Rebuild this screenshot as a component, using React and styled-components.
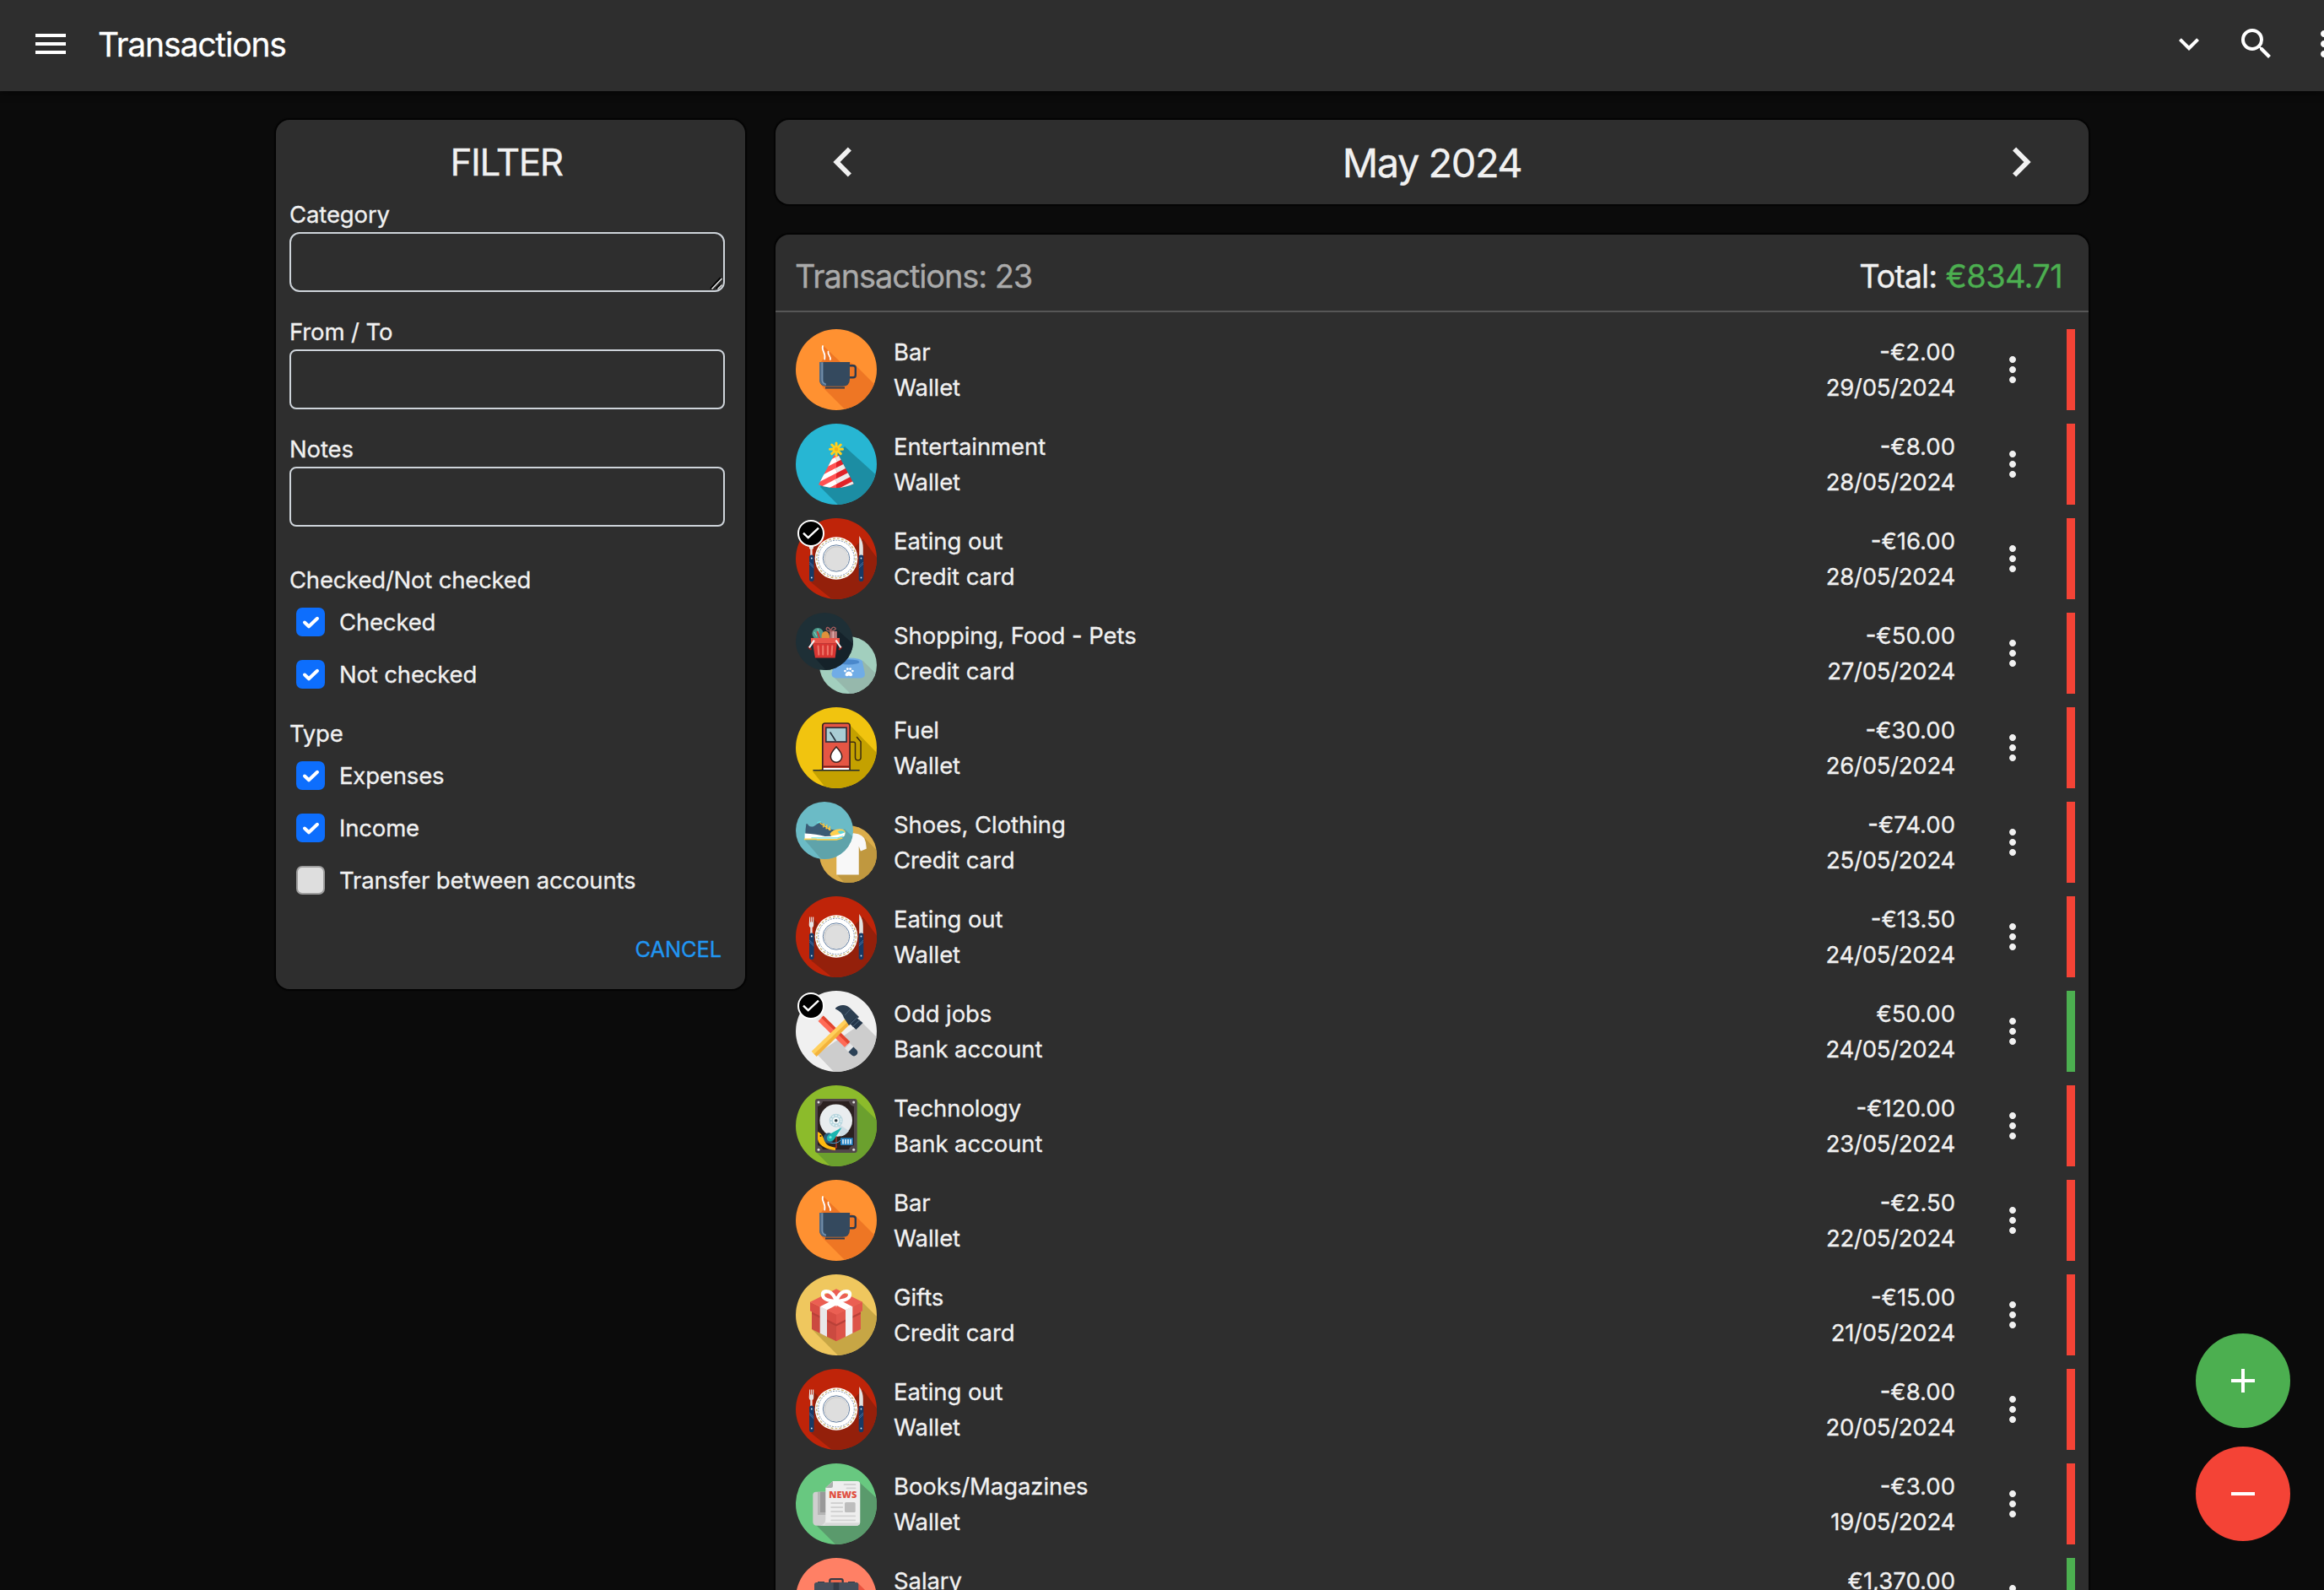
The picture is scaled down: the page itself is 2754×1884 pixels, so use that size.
import React from "react";
import styled, { createGlobalStyle, css } from "styled-components";

const GlobalStyle = createGlobalStyle`
  *, *::before, *::after { box-sizing: border-box; }
  html, body { margin: 0; background: #0b0b0b; }
  body {
    height: 1884px;
    overflow: hidden;
    color: #f1f1f1;
    font-family: Inter, "Liberation Sans", sans-serif;
    font-size: 27.5px;
    font-weight: 400;
    -webkit-text-stroke: 0.3px currentColor;
    line-height: 42px;
    letter-spacing: -0.12px;
  }
  button { font: inherit; letter-spacing: inherit; }
`;

/* ---------- shell ---------- */

const Page = styled.div`
  height: 1884px;
  overflow: hidden;
  display: flex;
  flex-direction: column;
`;

const AppBar = styled.header`
  flex: none;
  height: 108px;
  padding: 0 0 4px 36px;
  display: flex;
  align-items: center;
  background: #2e2e2e;
  color: #fff;
  box-shadow: 0 2px 8px rgba(0, 0, 0, 0.5);
`;

const AppTitle = styled.h1`
  flex: 1;
  margin: 1px 0 0 32px;
  font-size: 39px;
  font-weight: 400;
  letter-spacing: -1.15px;
`;

const AppActions = styled.div`
  flex: none;
  width: 184px;
  display: flex;
  gap: 32px;
  overflow: hidden;
`;

const IconButton = styled.button`
  flex: none;
  display: flex;
  padding: 0;
  border: 0;
  background: none;
  color: inherit;
`;

const Glyph = styled.svg`
  display: block;
  flex: none;
  width: ${(p) => p.$size || 48}px;
  height: ${(p) => p.$size || 48}px;
  fill: currentColor;
`;

const Content = styled.main`
  display: grid;
  grid-template-columns: 556px 1556px;
  column-gap: 36px;
  align-items: start;
  padding: 34px 0 0 327px;
`;

const Card = styled.section`
  background: #2e2e2e;
  border-radius: 16px;
  box-shadow: 0 0 1px 2px rgba(0, 0, 0, 0.7);
`;

/* ---------- filter ---------- */

const FilterCard = styled(Card)`
  height: 1030px;
  padding: 9px 24px 0 16px;
`;

const FilterTitle = styled.h2`
  margin: 0 2px 0 0;
  height: 82px;
  line-height: 82px;
  font-size: 44px;
  font-weight: 400;
  letter-spacing: -1.4px;
  text-align: center;
`;

const Field = styled.label`
  position: relative;
  display: block;
  margin-bottom: 26px;
`;

const fieldBox = css`
  display: block;
  width: 100%;
  height: 71px;
  border: 2px solid #ced4da;
  background: transparent;
  color: inherit;
  font: inherit;
  outline: none;
`;

const TextInput = styled.input`
  ${fieldBox}
  border-radius: 8px;
`;

const TextArea = styled.textarea`
  ${fieldBox}
  border-radius: 12px;
  resize: none;
`;

const Resizer = styled.svg`
  position: absolute;
  right: 2px;
  bottom: 2px;
  width: 16px;
  height: 16px;
`;

const Group = styled.fieldset`
  margin: 0;
  padding: 0;
  border: 0;
  display: flex;
  flex-direction: column;
  gap: 20px;
  margin-top: ${(p) => p.$top}px;
`;

const GroupName = styled.div`
  margin-bottom: -12px;
  letter-spacing: -0.22px;
`;

const Option = styled.label`
  display: flex;
  align-items: center;
  height: 42px;
  gap: 17px;
  padding-left: 8px;
  letter-spacing: -0.17px;
`;

const Box = styled.span`
  width: 34px;
  height: 34px;
  border-radius: 7px;
  background: ${(p) => (p.$on ? "#0d6efd" : "#dedede")};
  border: 2px solid ${(p) => (p.$on ? "#0d6efd" : "#9d9d9d")};
  svg { display: block; width: 30px; height: 30px; }
`;

const Cancel = styled.button`
  display: block;
  margin: 40px 4px 0 auto;
  padding: 0;
  border: 0;
  background: none;
  color: #2196f3;
  font-size: 25.5px;
  line-height: 42px;
`;

/* ---------- month + list ---------- */

const Column = styled.div`
  display: flex;
  flex-direction: column;
  gap: 36px;
`;

const MonthBar = styled(Card)`
  height: 100px;
  padding: 0 45px;
  display: flex;
  align-items: center;
  justify-content: space-between;
`;

const Month = styled.h2`
  margin: 1px 0 0;
  font-size: 47px;
  font-weight: 400;
  letter-spacing: -1.5px;
`;

const ListCard = styled(Card)`
  height: 1700px;
`;

const ListHead = styled.div`
  height: 92px;
  padding: 8px 31px 0 24px;
  display: flex;
  align-items: center;
  justify-content: space-between;
  border-bottom: 2px solid #565656;
  font-size: 38px;
  letter-spacing: -1.1px;
`;

const Count = styled.span`
  margin-left: -1px;
  color: #aaaaaa;
`;

const Sum = styled.span`
  margin-left: 1px;
  color: #4caf50;
  letter-spacing: -0.65px;
`;

const Rows = styled.ul`
  margin: 0;
  padding: 20px 16px 0 24px;
  list-style: none;
  display: flex;
  flex-direction: column;
  gap: 16px;
`;

const Row = styled.li`
  height: 96px;
  display: flex;
  align-items: center;
`;

const Names = styled.div`
  flex: 1;
  margin-left: 20px;
  letter-spacing: -0.08px;
`;

const Figures = styled.div`
  text-align: right;
`;

const Amount = styled.div`
  letter-spacing: 0;
`;

const DateText = styled.div`
  letter-spacing: -0.27px;
`;

const More = styled(IconButton)`
  margin: 0 40px 0 44px;
`;

const Stripe = styled.span`
  width: 10px;
  height: 96px;
  background: ${(p) => (p.$income ? "#4caf50" : "#f44336")};
`;

const Avatar = styled.div`
  position: relative;
  flex: none;
  width: 96px;
  height: 96px;
`;

const Disc = styled.svg`
  display: block;
  width: ${(p) => p.$size || 96}px;
  height: ${(p) => p.$size || 96}px;
  border-radius: 50%;
  background: ${(p) => p.$bg};
  ${(p) => p.$corner === "front" && css`position: absolute; left: 0; top: 0; z-index: 1;`}
  ${(p) => p.$corner === "back" && css`position: absolute; right: 0; bottom: 0;`}
`;

const Badge = styled.span`
  position: absolute;
  left: 2px;
  top: 2px;
  width: 32px;
  height: 32px;
  border: 2px solid #fff;
  border-radius: 50%;
  background: #000;
  svg { display: block; width: 28px; height: 28px; }
`;

const Fabs = styled.div`
  position: fixed;
  right: 40px;
  bottom: 58px;
  display: flex;
  flex-direction: column;
  gap: 22px;
`;

const Fab = styled.button`
  width: 112px;
  height: 112px;
  padding: 0;
  border: 0;
  border-radius: 50%;
  display: flex;
  align-items: center;
  justify-content: center;
  color: #fff;
  background: ${(p) => p.$color};
`;

/* ---------- glyphs ---------- */

const paths = {
  menu: "M3 18h18v-2H3v2zm0-5h18v-2H3v2zm0-7v2h18V6H3z",
  down: "M16.59 8.59 12 13.17 7.41 8.59 6 10l6 6 6-6z",
  search:
    "M15.5 14h-.79l-.28-.27A6.471 6.471 0 0 0 16 9.5 6.5 6.5 0 1 0 9.5 16c1.61 0 3.09-.59 4.23-1.57l.27.28v.79l5 4.99L20.49 19l-4.99-5zm-6 0C7.01 14 5 11.99 5 9.5S7.01 5 9.5 5 14 7.01 14 9.5 11.99 14 9.5 14z",
  more: "M12 8c1.1 0 2-.9 2-2s-.9-2-2-2-2 .9-2 2 .9 2 2 2zm0 2c-1.1 0-2 .9-2 2s.9 2 2 2 2-.9 2-2-.9-2-2-2zm0 6c-1.1 0-2 .9-2 2s.9 2 2 2 2-.9 2-2-.9-2-2-2z",
  left: "M15.41 7.41 14 6l-6 6 6 6 1.41-1.41L10.83 12z",
  right: "M10 6 8.59 7.41 13.17 12l-4.58 4.59L10 18l6-6z",
  add: "M19 13h-6v6h-2v-6H5v-2h6V5h2v6h6v2z",
  remove: "M19 13H5v-2h14v2z",
};

const Icon = ({ name, size }) => (
  <Glyph viewBox="0 0 24 24" $size={size}>
    <path d={paths[name]} />
  </Glyph>
);

/* ---------- category artwork, each on a 96-unit disc ---------- */

const Bar = () => (
  <>
    <path fill="#ee7624" d="M33 20 53 39h11l8 5 28 28v28H63L33 70l-4-6V40l4-5z" />
    <path fill="none" stroke="#fff" strokeWidth="1.8" strokeLinecap="round" d="M32 20c-2 5 4 8 2.200 15.500M38.500 26.500c-1 4 3 5 2.500 9.500" />
    <path fill="none" stroke="#2b3a4e" strokeWidth="2.400" d="M63 43.200h5q2.800 0 2.800 2.800v8.500q0 2.800-2.800 2.800h-5" />
    <path fill="#34495e" d="M28 39h36v20q0 8.700-8.500 8.700h-19Q28 67.700 28 59z" />
    <path fill="#4f6b88" d="M28 39h4.800v20q0 4.500 3.200 5.500v3Q28 67 28 59z" />
    <path fill="#7d97b2" d="M30.500 39.500h1.300V61q.5 3 4 3.700v1.400q-5.300-.8-5.300-6z" />
    <path stroke="#2b3a4e" strokeWidth="2" d="M35 69.500h23" />
  </>
);

const Party = () => (
  <>
    <path fill="#1c8da3" d="M58 27 100 65v35H54L29 75l19-38z" />
    <clipPath id="hat">
      <path d="M45.500 37h5L68.700 71.300Q59 76 48 76.300 36 76 27 72.300z" />
    </clipPath>
    <g clipPath="url(#hat)">
      <path fill="#ff5252" d="M20 30h28v50H20z" />
      <path fill="#e12228" d="M48 30h28v50H48z" />
      <path stroke="#fff" strokeWidth="5.600" d="M20 56.500 48 42.500M20 70 48 55.500M20 83.500 48 68.500" />
      <path stroke="#ececec" strokeWidth="5.600" d="M48 42.500 76 28.500M48 55.500 76 41M48 68.500 76 54M48 81.500 76 67" />
    </g>
    <path stroke="#ffd01f" strokeWidth="3" strokeLinecap="round" d="M48 23v15M40.500 30.300h15M42.700 25l10.600 10.600M53.300 25 42.700 35.600" />
    <circle cx="48" cy="30.300" r="2.200" fill="#f5ae1b" />
  </>
);

const Plate = () => (
  <>
    <path fill="#94200b" d="M21 27 42 48v30H21zM79.500 24.500 100 52v48H48L18 76l30-20z" />
    <path fill="#e6e6e6" d="M16.200 24.500h1v6h.9v-6h1v6h.9v-6h1.200V34q0 2.500-1.600 3V44h-2.300v-7q-1.600-.5-1.600-3z" />
    <path fill="#e2e2e2" d="M75.200 21q4.600 6 4.600 15v8h-4.600z" />
    <rect x="16" y="43.500" width="5.600" height="31.500" rx="2.800" fill="#173a66" />
    <rect x="74.700" y="43.500" width="5.600" height="31.500" rx="2.800" fill="#173a66" />
    <path stroke="#5d83b3" strokeWidth=".7" d="m16.200 52 5.200 5M16.200 54l5.200 5M74.900 57l5.200-5M74.900 59l5.200-5" />
    <g fill="#dfe7f0">
      <circle cx="18.800" cy="47.500" r=".9" />
      <circle cx="18.800" cy="70.500" r=".9" />
      <circle cx="77.500" cy="47.500" r=".9" />
      <circle cx="77.500" cy="70.500" r=".9" />
    </g>
    <circle cx="48" cy="47.500" r="25.300" fill="#fff" />
    <circle cx="48" cy="47.500" r="23.300" fill="none" stroke="#c9ae6a" strokeWidth="1.200" strokeDasharray="3 2" />
    <circle cx="48" cy="47.500" r="21.300" fill="none" stroke="#7e93ad" strokeWidth="1" strokeDasharray="2 1.300" />
    <circle cx="48" cy="47.500" r="15.700" fill="#fff" stroke="#4f6d93" strokeWidth=".9" />
    <circle cx="48" cy="47.500" r="14.600" fill="#cdcdcd" />
    <circle cx="48.600" cy="48.300" r="13.700" fill="#dedede" />
  </>
);

const Basket = () => (
  <>
    <path fill="#15222a" d="M70 29 100 56v44H54L30 73z" />
    <circle cx="37" cy="35" r="9.500" fill="#4d988a" />
    <path stroke="#7fd0c0" strokeWidth="1.500" d="m31 32 4 8M37 27l1 7" />
    <path stroke="#d73532" strokeWidth="2.500" d="m36 31 4 12" />
    <path fill="#e0913a" d="M43 43q-1-10 6-12 7-1 8 12z" />
    <path fill="#b97878" d="M57 31h12v12H57z" />
    <path stroke="#e0b0b0" strokeWidth="2" d="M62.500 31v12" />
    <path fill="none" stroke="#a45c5c" strokeWidth="2" d="M57.500 31q-8-1-6-5t7 4q3-8 7-5t-6 6" />
    <path fill="#e8554a" d="M25.400 42.400h48v9h-48z" />
    <path fill="#d73532" d="M28.500 51h40.400l-3 24.500H32.300z" />
    <path stroke="#ee7468" strokeWidth="3" strokeLinecap="round" d="m37.500 56 1 14M45.500 56v14M53.500 56v14M61 56l-1 14" />
    <path stroke="#8f1d1d" strokeWidth="3.400" strokeLinecap="round" d="m22 58 3 3M76 58l-3 3" />
    <path stroke="#f2f2f2" strokeWidth="3" d="m31 46-8.500 12.500M67 46l8.500 12.500" />
  </>
);

const Bowl = () => (
  <>
    <path fill="#96b8ac" d="M73 41 100 68v32H56L22 66z" />
    <path fill="#70ace6" d="M26 42h46l4 20q1 7.500-8 8H30q-10-.5-9.500-8z" />
    <ellipse cx="49" cy="42" rx="23" ry="6" fill="#70ace6" />
    <ellipse cx="49" cy="43" rx="18" ry="4.200" fill="#4a88cb" />
    <g fill="#fff">
      <path d="M43 65q1-6 6.200-6.500Q54.500 59 55.500 65q-2 3-6.300.5Q45 68 43 65z" />
      <circle cx="43" cy="58" r="2" />
      <circle cx="47" cy="54.500" r="2" />
      <circle cx="51.700" cy="54.500" r="2" />
      <circle cx="55.500" cy="58" r="2" />
    </g>
  </>
);

const Pump = () => (
  <>
    <path fill="#c4a100" d="M64 21 100 58v42H39L20 76l15-4z" />
    <rect x="31.800" y="19" width="32.300" height="56" rx="3" fill="#e55644" />
    <path fill="#fff" d="M32 72h32v3H32z" />
    <path fill="none" stroke="#3b2320" strokeWidth="1.700" d="M31.800 75V22q0-3 3-3h26.300q3 0 3 3v53" />
    <path stroke="#7a1d14" strokeWidth="1.800" d="M32.500 70.300h31" />
    <rect x="35.800" y="24.200" width="24.300" height="16.800" fill="#a9cdd4" stroke="#33303a" strokeWidth="1.700" />
    <path stroke="#26323d" strokeWidth="1.600" strokeLinecap="round" d="m41 30 6 9.500" />
    <path fill="#fff" stroke="#3b2320" strokeWidth="1.600" d="M48 47q6.700 7 6.700 11.500a6.700 6.700 0 0 1-13.400 0Q41.300 54 48 47z" />
    <path fill="none" stroke="#3b2b10" strokeWidth="1.500" strokeLinecap="round" d="M64.500 41.200h4.200q1.800 0 1.800 1.800v16.500a3.300 3.300 0 0 0 6.600 0V41l-4.600-5.500" />
    <path stroke="#222b2e" strokeWidth="1.600" strokeLinecap="round" d="M21 74.800h54" />
  </>
);

const Shoe = () => (
  <>
    <path fill="#5fa3aa" d="M82 46 100 63v37H46L15 64z" />
    <path fill="#3b5b75" d="M17.500 37q2-1 4 3 4 3 9 1l8.500-6q4-1 6 2l13 9q10 3 22 1.500l2 7-17 5-49-3q0-11 1.500-19.500z" />
    <path fill="#ffd04f" d="M57 54q4-8 17-8.500 5 0 8.500 3.500v7l-22 3z" />
    <path fill="#5cd6dc" d="M70 50q6-3 10-1l3 5-5 3z" />
    <path fill="none" stroke="#ffcb3d" strokeWidth="2" strokeLinecap="round" d="m41 36 17 11M47 37l-1 5M52 39l-1 6M57 42l-1 5" />
    <path stroke="#6de2e4" strokeWidth="2.500" strokeLinecap="round" d="m37 35 4-1.500" />
    <path fill="#fff" d="M15 53q20 1 34 5 18-1 34-7l-2 7-12 4H15z" />
    <path fill="none" stroke="#6de2e4" strokeWidth="1.500" d="M26 60.500h44l9-3" />
    <path fill="none" stroke="#f5cf55" strokeWidth="2.500" d="M14 62.500h20l2 1h32l10-3" />
  </>
);

const Shirt = () => (
  <>
    <path fill="#c0983f" d="M74 19 100 46v54H46L28.600 82z" />
    <path fill="#f8f8f8" d="M39 13q9 6 18 0l8 1.500q7 2.500 10 6.500 4 8 3.600 18l-9.600 4-3-8v47.500H28.600V35l-3 8-9.600-4q0-10 4-18 3-4 10-6.500z" />
  </>
);

const Tools = () => (
  <>
    <path fill="#cdcdcd" d="M79 38 100 59v41H49L25 75z" />
    <g transform="rotate(44.500 29 32)">
      <path fill="#e6e6e6" d="M24 27.500h8v9h-8z" />
      <path fill="#ff6b57" d="M30 28h44v8.500H30z" />
      <path fill="#e2452f" d="M30 27.500h44v3.600H30z" />
    </g>
    <g transform="rotate(45 64 68)">
      <path fill="#e4e6e8" d="M60 63.800h6v8.400h-6z" />
      <path fill="#2c4257" d="M66 63.800h5q4.200 0 4.200 4.200T71 72.200h-5z" />
    </g>
    <g transform="rotate(-44 22.700 73.500)">
      <path fill="#ffd05c" d="M21 69.500h66v5H21z" />
      <path fill="#f3b33c" d="M21 74h66v4H21z" />
    </g>
    <path fill="#2c3e50" d="M47 20.500Q51 16.500 57 17q5 .5 9 5l9 9-12 10-6-9q-2-7-10-10.500z" />
    <path fill="#24364a" d="m71 31 8.500 7-8 8-8-7.500z" />
    <path stroke="#50667c" strokeWidth="1" d="m64.500 22-6.500 7M73 31.500l-8.500 8M76 34.500l-8.500 8" />
  </>
);

const Drive = () => (
  <>
    <path fill="#6ba02e" d="M72 18 100 45v55H45L25 80z" />
    <rect x="23" y="16" width="49.700" height="64" rx="3" fill="#51474a" />
    <path fill="#2b2120" d="M26 25q5-1 6-6h31q1 5 6 6v46q-5 1-6 5H32q-1-4-6-5z" />
    <g fill="#dcdcdc">
      <circle cx="27" cy="20" r="1.500" />
      <circle cx="68.700" cy="20" r="1.500" />
      <circle cx="27" cy="76.300" r="1.500" />
      <circle cx="68.700" cy="76.300" r="1.500" />
    </g>
    <circle cx="47.700" cy="41.700" r="19.300" fill="#e9edef" />
    <path fill="#cfdde5" d="m50 45 13 9q-5 6-10 6.500z" />
    <circle cx="47.700" cy="41.700" r="8" fill="#b7d6de" />
    <circle cx="47.700" cy="41.700" r="6" fill="none" stroke="#e9f3f6" strokeWidth="1.600" strokeDasharray="2 1.800" />
    <circle cx="47.700" cy="41.700" r="3.600" fill="#f6fafb" />
    <circle cx="47.700" cy="41.700" r="1.800" fill="#2b3f46" />
    <path fill="none" stroke="#c0392b" strokeWidth="1.200" d="M38 74h10V60" />
    <path fill="none" stroke="#4aa3d8" strokeWidth="1" d="M40 68q9 2 13-3" />
    <circle cx="39" cy="62.500" r="6.200" fill="#2b5c7c" />
    <path fill="#ffb90f" d="M26 55q5 2 7 8 2 7 7 9l7 2v3q-8-1-12-3-8-4-9-10z" />
    <circle cx="29.500" cy="60" r="1" fill="#2b2120" />
    <path fill="#1cb5b0" d="m54.500 50-9 14q-4 4-7.500 1.500-3-3.500 1-7z" />
    <circle cx="41" cy="61.500" r="1.600" fill="#7ce6e0" />
    <rect x="53" y="62.300" width="14.700" height="8.600" fill="#2484c6" />
    <path stroke="#e6f2fa" strokeWidth="1.600" d="M56 64v5.500M59 64v5.500M62 64v5.500M65 64v5.500" />
  </>
);

const Gift = () => (
  <>
    <path fill="#c7a645" d="M78 32 100 54v46H54L20 66z" />
    <path fill="#cb4a40" d="M19 43 48 57.500v21.800L19 65z" />
    <path fill="#dd5448" d="M77 43 48 57.500v21.800L77 65z" />
    <path fill="#b94138" d="M19 44.500 48 59v2.500L19 47zM77 44.500 48 59v2.500L77 47z" />
    <path fill="#d84e44" d="M17 32.700 48 47.300v11.400L17 43.300z" />
    <path fill="#e2574c" d="M79 32.700 48 47.300v11.400l31-15.400z" />
    <path fill="#eb5f53" d="M48 17.300 79 32.700 48 47.700 17 32.700z" />
    <path fill="#e8e8e8" d="m28.700 38 8.300 4v32l-8.300-4.200z" />
    <path fill="#f1f1f1" d="M67.300 38 59 42v32l8.300-4.200z" />
    <path fill="#fff" d="M28.700 38.300 48 28.500l19.300 9.800-8.300 4-11-5.800-11 5.800z" />
    <path fill="none" stroke="#fff" strokeWidth="4.200" d="M47.500 32Q33 31 32 25t7-4.500q6 2 9 11.500Q51 22.500 57 20.500q8-1.500 7 4.500T47.500 32z" />
  </>
);

const NewsTitle = styled.text`
  fill: #e04f3f;
  font-family: "Open Sans", sans-serif;
  font-weight: 800;
  font-size: 11.300px;
  letter-spacing: 0;
  -webkit-text-stroke: 0;
`;

const News = () => (
  <>
    <path fill="#5a9a6c" d="M75 22 100 45v55H51L24 73z" />
    <path fill="#cfcfcf" d="M24 33.700h12v40H25q-4.700 0-4.700-5V37.500q0-3.800 3.700-3.800z" />
    <path fill="#b4b4b4" d="M26 33.700h10V61H26z" />
    <path fill="#999" d="M29 33.700h7V58h-7z" />
    <path fill="#dedede" d="M40 73.700H27q8-.5 8.300-8z" />
    <path fill="#eeeeee" d="M44 21h28.500q3.800 0 3.800 3.800v44.500q0 4.400-4.400 4.400H32q3.300-1.500 3.300-6V29z" />
    <path fill="#d9d9d9" d="M32 73.700q3-1 3.300-3.500h41q-.5 3.500-4.400 3.500z" />
    <path fill="#a9b0ac" d="M44 21v5.500q0 2.500-2.500 2.500h-6.200z" />
    <path stroke="#d2d2d2" strokeWidth="1.800" strokeLinecap="round" d="M57.500 25h13M60.500 29.300h10M42.200 47h13M42.200 52h13M42.200 57h13M42.200 62.300h28M42.200 67.300h28" />
    <rect x="58" y="46" width="12.700" height="12" rx="1.500" fill="#bdbdbd" />
    <NewsTitle x="39.300" y="41.300" textLength="33" lengthAdjust="spacingAndGlyphs">NEWS</NewsTitle>
  </>
);

const Briefcase = () => (
  <>
    <path fill="#e9523f" d="M74 30 100 56v44H30z" />
    <path fill="#e9694f" d="M41 25h15v5H41z" />
    <path fill="none" stroke="#323a45" strokeWidth="2.200" d="M40.300 30v-3q0-2 2-2h11.400q2 0 2 2v3" />
    <path fill="#343c47" d="M26 28h8v2h-8zM62 28h8v2h-8z" />
    <rect x="22" y="29" width="52.300" height="40" rx="2.500" fill="#464f5b" />
    <path fill="#333b46" d="M44.700 29h6.600v30h-6.600z" />
  </>
);

const categories = {
  bar: { bg: "#ff9131", Art: Bar },
  party: { bg: "#27b6d3", Art: Party },
  plate: { bg: "#bf2409", Art: Plate },
  basket: { bg: "#1e2f36", Art: Basket },
  bowl: { bg: "#a2cfbe", Art: Bowl },
  pump: { bg: "#f1c40f", Art: Pump },
  shoe: { bg: "#6bbbc6", Art: Shoe },
  shirt: { bg: "#dbad4b", Art: Shirt },
  tools: { bg: "#f0f0f0", Art: Tools },
  drive: { bg: "#8cbb2b", Art: Drive },
  gift: { bg: "#efc75e", Art: Gift },
  news: { bg: "#68c880", Art: News },
  briefcase: { bg: "#ff8065", Art: Briefcase },
};

const Category = ({ name, corner }) => {
  const { bg, Art } = categories[name];
  return (
    <Disc viewBox="0 0 96 96" $bg={bg} $corner={corner} $size={corner ? 68 : 96}>
      <Art />
    </Disc>
  );
};

const transactions = [
  { icons: ["bar"], title: "Bar", account: "Wallet", amount: "-€2.00", date: "29/05/2024" },
  { icons: ["party"], title: "Entertainment", account: "Wallet", amount: "-€8.00", date: "28/05/2024" },
  { icons: ["plate"], title: "Eating out", account: "Credit card", amount: "-€16.00", date: "28/05/2024", checked: true },
  { icons: ["basket", "bowl"], title: "Shopping, Food - Pets", account: "Credit card", amount: "-€50.00", date: "27/05/2024" },
  { icons: ["pump"], title: "Fuel", account: "Wallet", amount: "-€30.00", date: "26/05/2024" },
  { icons: ["shoe", "shirt"], title: "Shoes, Clothing", account: "Credit card", amount: "-€74.00", date: "25/05/2024" },
  { icons: ["plate"], title: "Eating out", account: "Wallet", amount: "-€13.50", date: "24/05/2024" },
  { icons: ["tools"], title: "Odd jobs", account: "Bank account", amount: "€50.00", date: "24/05/2024", checked: true, income: true },
  { icons: ["drive"], title: "Technology", account: "Bank account", amount: "-€120.00", date: "23/05/2024" },
  { icons: ["bar"], title: "Bar", account: "Wallet", amount: "-€2.50", date: "22/05/2024" },
  { icons: ["gift"], title: "Gifts", account: "Credit card", amount: "-€15.00", date: "21/05/2024" },
  { icons: ["plate"], title: "Eating out", account: "Wallet", amount: "-€8.00", date: "20/05/2024" },
  { icons: ["news"], title: "Books/Magazines", account: "Wallet", amount: "-€3.00", date: "19/05/2024" },
  { icons: ["briefcase"], title: "Salary", account: "Bank account", amount: "€1,370.00", date: "18/05/2024", income: true },
];

const TransactionRow = ({ icons, title, account, amount, date, checked, income }) => (
  <Row>
    <Avatar>
      {icons.length === 1 ? (
        <Category name={icons[0]} />
      ) : (
        <>
          <Category name={icons[0]} corner="front" />
          <Category name={icons[1]} corner="back" />
        </>
      )}
      {checked && (
        <Badge>
          <svg viewBox="-14 -14 28 28">
            <path d="M-9-.3-3.300 5.200 9-6.300" fill="none" stroke="#fff" strokeWidth="2.400" />
          </svg>
        </Badge>
      )}
    </Avatar>
    <Names>
      <div>{title}</div>
      <div>{account}</div>
    </Names>
    <Figures>
      <Amount>{amount}</Amount>
      <DateText>{date}</DateText>
    </Figures>
    <More>
      <Icon name="more" />
    </More>
    <Stripe $income={income} />
  </Row>
);

const CheckOption = ({ on, children }) => (
  <Option>
    <Box $on={on}>
      {on && (
        <svg viewBox="0 0 30 30">
          <path d="m8 15.500 5 4.800L23 10.800" fill="none" stroke="#fff" strokeWidth="4" strokeLinecap="round" strokeLinejoin="round" />
        </svg>
      )}
    </Box>
    {children}
  </Option>
);

export default function App() {
  return (
    <Page>
      <GlobalStyle />
      <AppBar>
        <IconButton>
          <Icon name="menu" />
        </IconButton>
        <AppTitle>Transactions</AppTitle>
        <AppActions>
          <IconButton>
            <Icon name="down" />
          </IconButton>
          <IconButton>
            <Icon name="search" />
          </IconButton>
          <IconButton>
            <Icon name="more" />
          </IconButton>
        </AppActions>
      </AppBar>

      <Content>
        <FilterCard>
          <FilterTitle>FILTER</FilterTitle>
          <Field>
            Category
            <TextArea />
            <Resizer viewBox="0 0 16 16">
              <path d="M1 14 13 1M8 14l5-5" stroke="#000" strokeWidth="2" />
              <path d="M2.500 14.500 14.500 2M9.500 14.500l5-5" stroke="#e6e6e6" strokeWidth="1.500" />
            </Resizer>
          </Field>
          <Field>
            From / To
            <TextInput />
          </Field>
          <Field>
            Notes
            <TextInput />
          </Field>
          <Group $top={42}>
            <GroupName>Checked/Not checked</GroupName>
            <CheckOption on>Checked</CheckOption>
            <CheckOption on>Not checked</CheckOption>
          </Group>
          <Group $top={28}>
            <GroupName>Type</GroupName>
            <CheckOption on>Expenses</CheckOption>
            <CheckOption on>Income</CheckOption>
            <CheckOption>Transfer between accounts</CheckOption>
          </Group>
          <Cancel>CANCEL</Cancel>
        </FilterCard>

        <Column>
          <MonthBar>
            <IconButton>
              <Icon name="left" size={70} />
            </IconButton>
            <Month>May 2024</Month>
            <IconButton>
              <Icon name="right" size={70} />
            </IconButton>
          </MonthBar>
          <ListCard>
            <ListHead>
              <Count>Transactions: 23</Count>
              <span>
                Total: <Sum>€834.71</Sum>
              </span>
            </ListHead>
            <Rows>
              {transactions.map((t, i) => (
                <TransactionRow key={i} {...t} />
              ))}
            </Rows>
          </ListCard>
        </Column>
      </Content>

      <Fabs>
        <Fab $color="#4caf50">
          <Icon name="add" />
        </Fab>
        <Fab $color="#f44336">
          <Icon name="remove" />
        </Fab>
      </Fabs>
    </Page>
  );
}
